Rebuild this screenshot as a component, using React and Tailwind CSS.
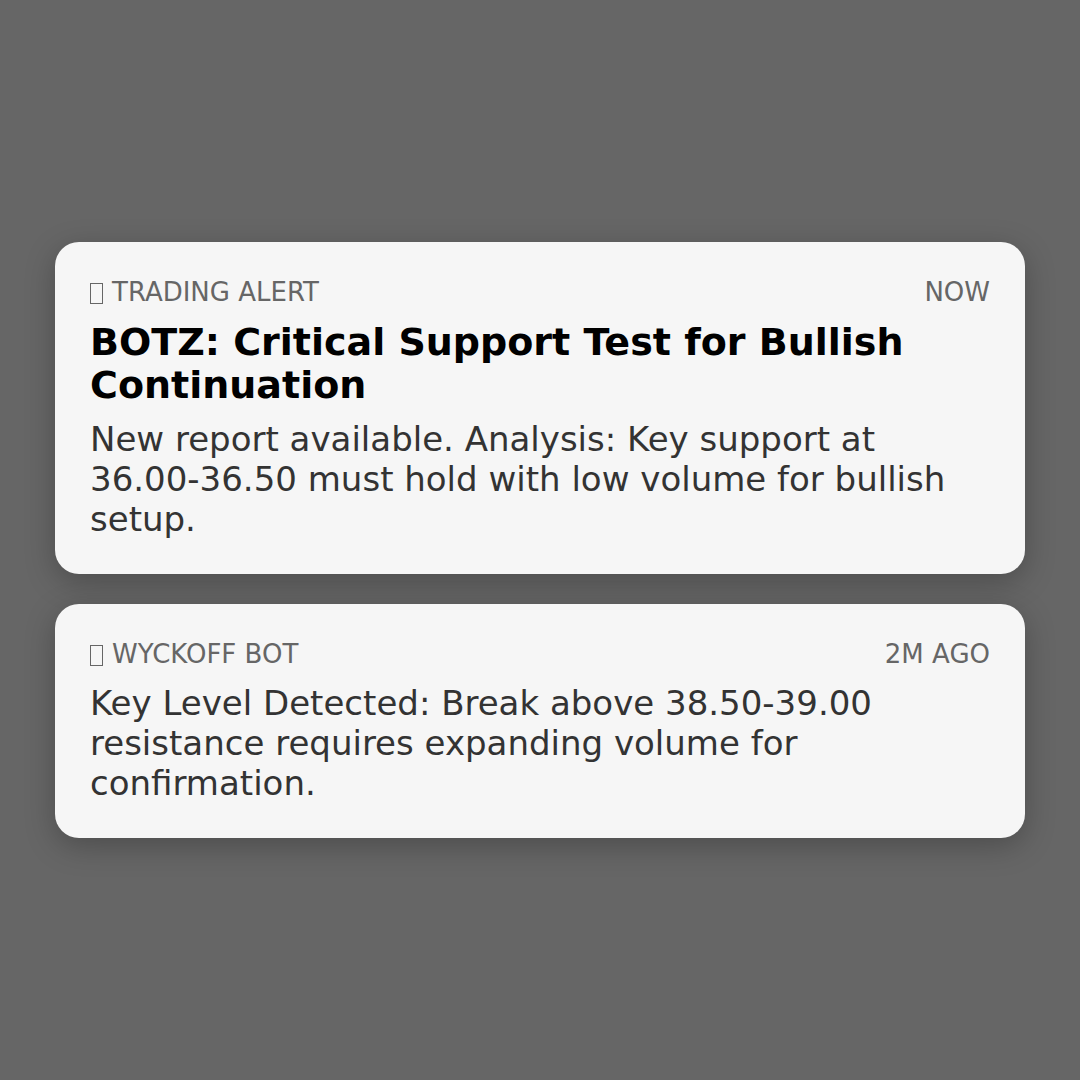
import React from "react";

const alerts = [
  {
    source: "TRADING ALERT",
    time: "NOW",
    title: "BOTZ: Critical Support Test for Bullish Continuation",
    body: "New report available. Analysis: Key support at 36.00-36.50 must hold with low volume for bullish setup.",
  },
  {
    source: "WYCKOFF BOT",
    time: "2M AGO",
    body: "Key Level Detected: Break above 38.50-39.00 resistance requires expanding volume for confirmation.",
  },
];

function Notice({ source, time, title, body }) {
  return (
    <div className="bg-[#f6f6f6] rounded-[24px] px-[35px] py-[35px] shadow-[0_8px_30px_rgba(0,0,0,0.25)]">
      {/* header row */}
      <div className="flex items-center justify-between text-[26px] leading-[30px] text-[#666666]">
        <div className="flex items-center">
          {/* missing-glyph box in the original */}
          <span className="inline-block w-[13px] h-[21px] border border-[#666666] mr-[9px] mt-[2px]" />
          <span>{source}</span>
        </div>
        <span>{time}</span>
      </div>
      {title && (
        <h2 className="mt-[14px] text-[38px] leading-[43px] font-bold text-black">
          {title}
        </h2>
      )}
      <p
        className={
          title
            ? "mt-[12px] text-[34px] leading-[40px] text-[#333333]"
            : "mt-[14px] text-[34px] leading-[40px] text-[#333333]"
        }
      >
        {body}
      </p>
    </div>
  );
}

export default function App() {
  return (
    <div
      className="min-h-screen bg-[#666666] flex flex-col justify-center gap-[30px] px-[55px]"
      style={{ fontFamily: '"DejaVu Sans", sans-serif' }}
    >
      {alerts.map((a, i) => (
        <Notice key={i} {...a} />
      ))}
    </div>
  );
}
